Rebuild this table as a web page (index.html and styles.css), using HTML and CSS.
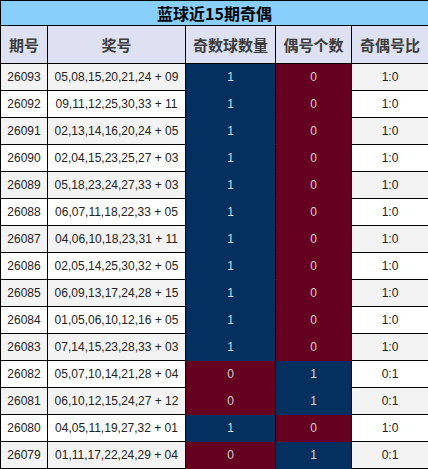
FILE: index.html
```html
<!DOCTYPE html>
<html lang="zh">
<head>
<meta charset="utf-8">
<title>蓝球近15期奇偶</title>
<link rel="stylesheet" href="styles.css">
</head>
<body>
<table class="stats">
  <colgroup>
    <col class="c1"><col class="c2"><col class="c3"><col class="c4"><col class="c5">
  </colgroup>
  <thead>
    <tr class="title-row"><th colspan="5">蓝球近15期奇偶</th></tr>
    <tr class="head-row"><th>期号</th><th>奖号</th><th>奇数球数量</th><th>偶号个数</th><th>奇偶号比</th></tr>
  </thead>
  <tbody>
    <tr class="alt"><td>26093</td><td>05,08,15,20,21,24 + 09</td><td class="blue">1</td><td class="red">0</td><td>1:0</td></tr>
    <tr><td>26092</td><td>09,11,12,25,30,33 + 11</td><td class="blue">1</td><td class="red">0</td><td>1:0</td></tr>
    <tr class="alt"><td>26091</td><td>02,13,14,16,20,24 + 05</td><td class="blue">1</td><td class="red">0</td><td>1:0</td></tr>
    <tr><td>26090</td><td>02,04,15,23,25,27 + 03</td><td class="blue">1</td><td class="red">0</td><td>1:0</td></tr>
    <tr class="alt"><td>26089</td><td>05,18,23,24,27,33 + 03</td><td class="blue">1</td><td class="red">0</td><td>1:0</td></tr>
    <tr><td>26088</td><td>06,07,11,18,22,33 + 05</td><td class="blue">1</td><td class="red">0</td><td>1:0</td></tr>
    <tr class="alt"><td>26087</td><td>04,06,10,18,23,31 + 11</td><td class="blue">1</td><td class="red">0</td><td>1:0</td></tr>
    <tr><td>26086</td><td>02,05,14,25,30,32 + 05</td><td class="blue">1</td><td class="red">0</td><td>1:0</td></tr>
    <tr class="alt"><td>26085</td><td>06,09,13,17,24,28 + 15</td><td class="blue">1</td><td class="red">0</td><td>1:0</td></tr>
    <tr><td>26084</td><td>01,05,06,10,12,16 + 05</td><td class="blue">1</td><td class="red">0</td><td>1:0</td></tr>
    <tr class="alt"><td>26083</td><td>07,14,15,23,28,33 + 03</td><td class="blue">1</td><td class="red">0</td><td>1:0</td></tr>
    <tr><td>26082</td><td>05,07,10,14,21,28 + 04</td><td class="red">0</td><td class="blue">1</td><td>0:1</td></tr>
    <tr class="alt"><td>26081</td><td>06,10,12,15,24,27 + 12</td><td class="red">0</td><td class="blue">1</td><td>0:1</td></tr>
    <tr><td>26080</td><td>04,05,11,19,27,32 + 01</td><td class="blue">1</td><td class="red">0</td><td>1:0</td></tr>
    <tr class="alt"><td>26079</td><td>01,11,17,22,24,29 + 04</td><td class="red">0</td><td class="blue">1</td><td>0:1</td></tr>
  </tbody>
</table>
</body>
</html>
```
FILE: styles.css
```css
html, body {
  margin: 0;
  padding: 0;
  background: #ffffff;
}

.stats {
  width: 428px;
  border-collapse: collapse;
  table-layout: fixed;
  font-family: "Liberation Sans", "Noto Sans CJK SC", sans-serif;
}

.c1 { width: 47px; }
.c2 { width: 138px; }
.c3 { width: 90px; }
.c4 { width: 76px; }
.c5 { width: 77px; }

.stats th,
.stats td {
  border: 1px solid #000;
  padding: 0;
  text-align: center;
  overflow: hidden;
  white-space: nowrap;
}

.title-row th {
  height: 24px;
  background: #87cefa;
  color: #000;
  font-family: "Noto Sans CJK SC", sans-serif;
  font-size: 16px;
  font-weight: bold;
  line-height: 24px;
}

.head-row th {
  height: 37px;
  background: #dde1f1;
  color: #3c3c3c;
  font-family: "Noto Sans CJK SC", sans-serif;
  font-size: 15px;
  font-weight: bold;
}

.stats td {
  height: 26px;
  font-size: 12px;
  color: #222;
  background: #ffffff;
}

.stats tr.alt td {
  background: #f3f3f3;
}

.stats tr td.blue {
  background: #04305f;
  color: #d4d8e0;
  border-top-color: #04305f;
  border-bottom-color: #04305f;
}

.stats tr td.red {
  background: #650020;
  color: #d8cfd2;
  border-top-color: #650020;
  border-bottom-color: #650020;
}
```
